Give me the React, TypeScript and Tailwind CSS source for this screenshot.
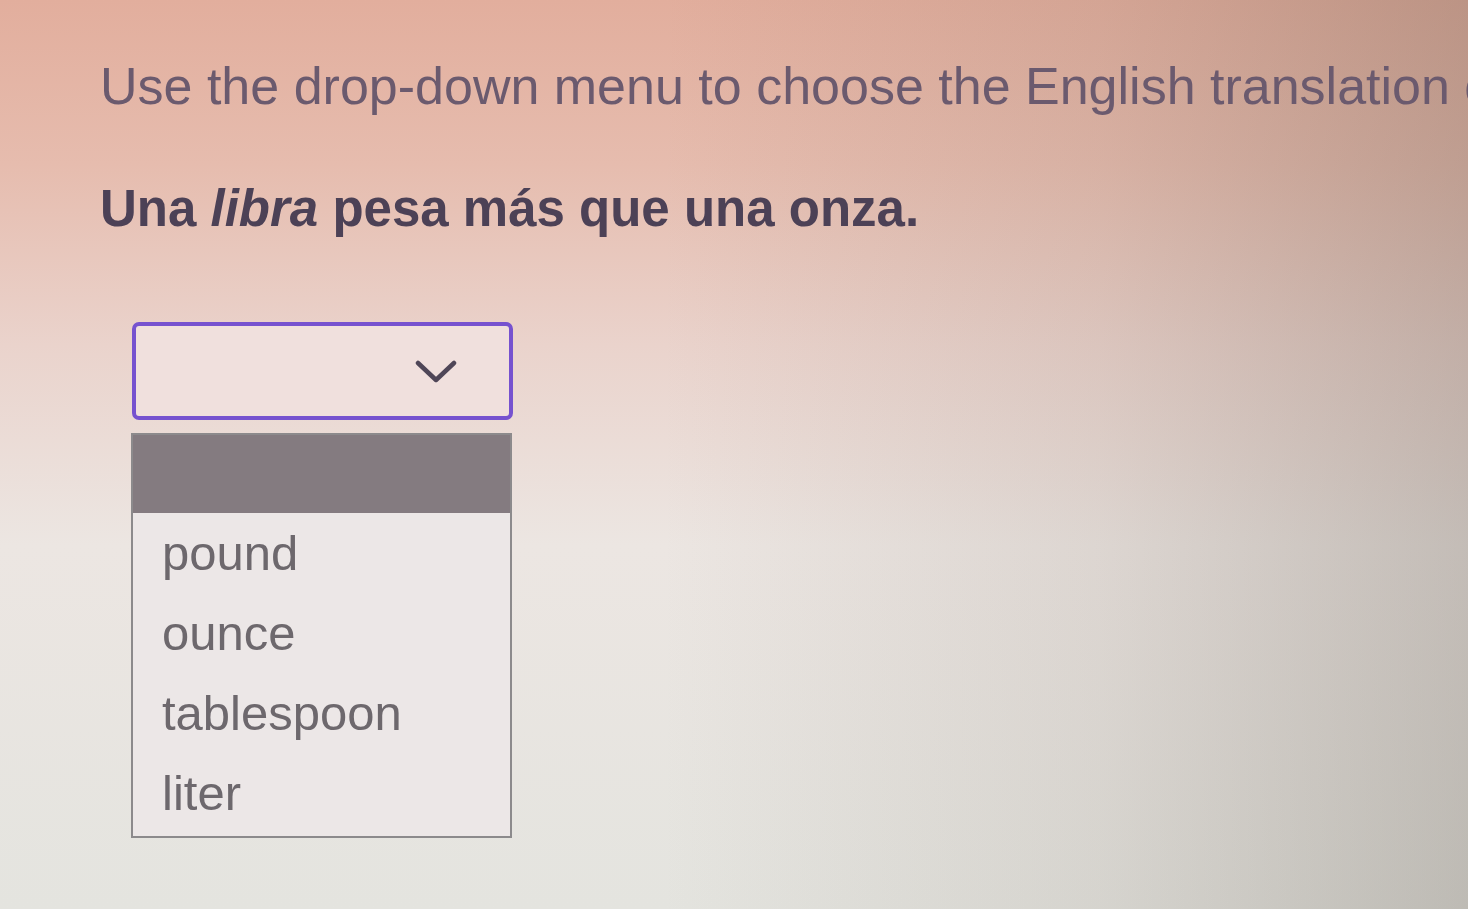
import React from "react";

export default function App() {
  const options = ["pound", "ounce", "tablespoon", "liter"];
  return (
    <div
      className="w-[1468px] h-[909px] overflow-hidden relative"
      style={{ fontFamily: '"Liberation Sans", Arial, sans-serif' }}
    >
      <div className="absolute inset-0 bg-[linear-gradient(to_bottom,#e2ae9d_0%,#e6bcae_18%,#ead3cc_38%,#ece6e2_60%,#e4e4df_100%)]" />
      <div className="absolute inset-0 bg-[linear-gradient(to_right,rgba(0,0,0,0)_45%,rgba(110,95,85,0.12)_75%,rgba(90,80,70,0.28)_100%)]" />
      <div className="relative flex flex-col pl-[100px] pt-[60px]">
        <div className="text-[52px] leading-none whitespace-nowrap text-[#6b5a6e]">
          Use the drop-down menu to choose the English translation of
        </div>
        <div className="mt-[71px] text-[51px] leading-none font-bold whitespace-nowrap text-[#4c4156]">
          Una <span className="italic">libra</span> pesa más que una onza.
        </div>
        <div className="mt-[88px] ml-[32px] w-[381px] h-[98px] border-[4px] border-[#7652cf] rounded-[7px] bg-[#f0e0dd] flex items-center justify-end pr-[52px]">
          <svg width="42" height="24" viewBox="0 0 42 24" fill="none" className="mt-[2px]">
            <path d="M3 3 L21 20 L39 3" stroke="#4f4657" strokeWidth="4.5" strokeLinecap="round" strokeLinejoin="round" />
          </svg>
        </div>
        <div className="mt-[13px] ml-[31px] w-[381px] border-2 border-[#8c8a8c] bg-[#ece7e7] flex flex-col pb-[3px]">
          <div className="h-[78px] bg-[#847b80]" />
          {options.map((o) => (
            <div key={o} className="h-[80px] flex items-center pl-[29px] text-[49px] leading-none text-[#6d686d]">
              {o}
            </div>
          ))}
        </div>
      </div>
    </div>
  );
}
